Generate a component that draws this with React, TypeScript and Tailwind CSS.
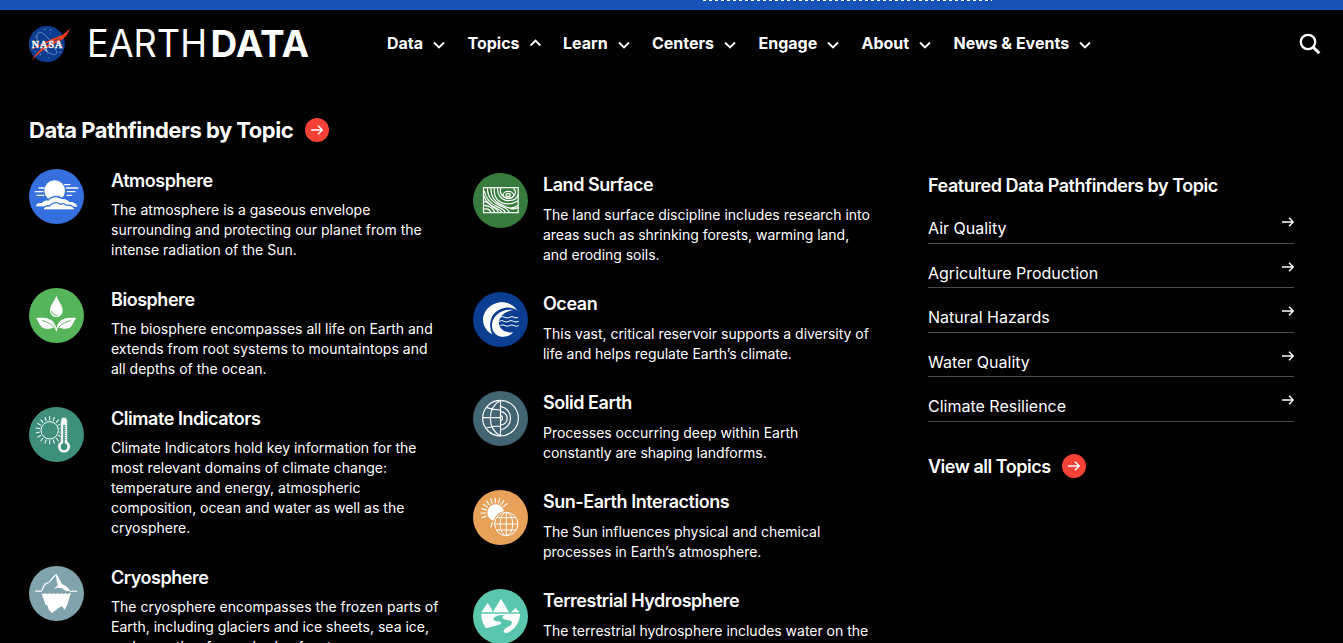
import type { ReactNode } from "react";

type Topic = { title: string; lines: string[]; icon: ReactNode };

const Atmosphere = () => (
  <svg viewBox="27 177 165 165" className="size-[55px] shrink-0">
    <circle cx="109.500" cy="259.500" r="82.500" fill="#3570de" />
    <g stroke="#fff" strokeWidth="4" strokeLinecap="round">
      <path d="M57 234h15M46 245h23M51 256h20M134 224h16M139 234h34M142 245h23M141 256h14" />
    </g>
    <circle cx="104" cy="242" r="31" fill="#fff" />
    <path d="M48 289c0-8 8-13 17-10 5-8 13-11 21-8 7-12 27-15 40-5 10-2 19 2 23 8 12-1 23 6 23 16z" fill="#fff" stroke="#3570de" strokeWidth="5" />
    <path d="M48 289c0-7 8-12 17-9 5-7 13-10 20-7 8-11 27-14 39-5 10-1 19 2 24 9 12-1 23 5 24 13z" fill="#fff" />
    <path d="M70 297c2-8 10-11 18-9 7-11 24-13 33-5 8-4 14-1 18 3 12-2 22 3 24 11z" fill="#fff" stroke="#3570de" strokeWidth="4" />
    <path d="M72 296h90" stroke="#fff" strokeWidth="4" />
  </svg>
);

const Biosphere = () => (
  <svg viewBox="27 24 165 165" className="size-[55px] shrink-0">
    <circle cx="109.500" cy="106.500" r="82.500" fill="#56b45a" />
    <path d="M109 47c5 16 19 28 19 45a19 19 0 0 1-38 0c0-17 14-29 19-45z" fill="#fff" />
    <path d="M95 94c2 8 8 12 16 12" fill="none" stroke="#56b45a" strokeWidth="3" strokeLinecap="round" />
    <path d="M48 114c24-3 48 0 56 18l5 12 5-12c8-18 32-21 55-18-9 9-10 27-24 31-13 4-23-2-29-2-4 3-5 8-7 13-2-5-3-10-7-13-7 1-16 6-30 2-14-5-15-22-24-31z" fill="#fff" />
    <path d="M68 122c14 4 27 10 37 24M150 122c-14 4-27 10-37 24" fill="none" stroke="#56b45a" strokeWidth="3" strokeLinecap="round" />
  </svg>
);

const rayAngles = Array.from({ length: 18 }, (_, i) => i * 20);

const Climate = () => (
  <svg viewBox="27 381 165 165" className="size-[55px] shrink-0">
    <circle cx="109.500" cy="463.500" r="82.500" fill="#3e907c" />
    <circle cx="89" cy="451" r="26" fill="none" stroke="#fff" strokeWidth="3" />
    {rayAngles.map((a) => (
      <path key={a} d="M89 420v-10" stroke="#fff" strokeWidth="3" strokeLinecap="round" transform={`rotate(${a} 89 451)`} />
    ))}
    <path d="M122 422a10 10 0 0 1 20 0v62a19 19 0 1 1-20 0z" fill="#fff" stroke="#3e907c" strokeWidth="2" />
    <path d="M132 434v58" stroke="#3e907c" strokeWidth="5" />
    <path d="M137 436v46" stroke="#3e907c" strokeWidth="3" strokeDasharray="2 4" />
    <circle cx="132" cy="500" r="10" fill="#3e907c" />
  </svg>
);

const Cryosphere = () => (
  <svg viewBox="27 33 165 165" className="size-[55px] shrink-0">
    <circle cx="109.500" cy="115.500" r="82.500" fill="#80a3ad" />
    <path d="M47 109c7-5 10 3 16 0 7-5 5-14 13-22 7-3 12-4 17-12l12-14 4-2 7 13 9 17c8 3 12 6 18 11 6 8 6 12 12 9l6-1 9 1" fill="none" stroke="#fff" strokeWidth="3.500" strokeLinecap="round" strokeLinejoin="round" />
    <path d="M108 60l8 12 9 18c7 2 15 6 21 12 4 6-2 7-7 7l-13-9-15-2-10 4 13-12-4-12z" fill="#fff" />
    <path d="M64 114q6 6 12 0 6 6 12 0 6 6 12 0 6 6 12 0 6 6 12 0 6 6 12 0 6 6 13 0h4c-4 14-7 18-10 32l-9 18-9-11c-5 5-11 5-14 10l-15 11-9-9-6-16-4 2z" fill="#fff" />
  </svg>
);

const LandSurface = () => (
  <svg viewBox="24 24 165 165" className="size-[55px] shrink-0">
    <circle cx="106.500" cy="106.500" r="82.500" fill="#377c3d" />
    <rect x="55.500" y="68" width="104" height="75" fill="none" stroke="#fff" strokeWidth="3.500" />
    <g fill="none" stroke="#fff" strokeWidth="3.600">
      <rect x="123" y="86" width="13" height="8" rx="4" />
      <ellipse cx="130" cy="90" rx="16" ry="11" />
      <path d="M98 69c-2 17 9 38 32 38 17 0 27-8 29-18M108 69c-5 10 0 29 22 30 15 0 25-12 20-23l-5-7" />
      <path d="M88 69c-3 31 15 44 34 47 15 3 24-1 37-8M78 69c-1 42 30 49 46 57 11 5 21 5 35-5M67 69c1 32 19 44 38 53 13 6 24 9 29 21M58 78c5 26 20 39 39 47 12 5 20 9 25 18M57 94c7 18 20 28 34 34 9 4 16 7 20 15M57 109c9 0 19 13 31 20 8 4 11 8 13 14M57 121c15 1 28 9 33 22M57 132c10-2 18 2 21 11M135 130c9 3 17 1 24-2" />
    </g>
  </svg>
);

const Ocean = () => (
  <svg viewBox="24 381 165 165" className="size-[55px] shrink-0">
    <circle cx="106.500" cy="463.500" r="82.500" fill="#0b3d91" />
    <path d="M157 437c-14-23-44-32-70-20-28 13-40 43-29 66 5 11 12 19 24 25-17-35 0-76 40-80 14-1 25 2 35 9z" fill="#fff" />
    <path d="M146 435c-37-6-67 19-65 49 1 18 14 33 34 31 11-1 23-4 29-13-25 2-41-9-42-27-1-19 15-36 44-40z" fill="#fff" />
    <path d="M106 457q8-5 14 0 7 4 14 0 7-5 13 0 6 3 12 0M102 469q8-5 15 0 7 4 14 0 7-5 14 0 8 4 16 0M106 482q8-5 14 0 7 4 14 0 7-5 13 0 7 4 14 0" fill="none" stroke="#fff" strokeWidth="3" />
  </svg>
);

const SolidEarth = () => (
  <svg viewBox="24 18 165 165" className="size-[55px] shrink-0">
    <circle cx="106.500" cy="100.500" r="82.500" fill="#436472" />
    <g fill="none" stroke="#fff" strokeWidth="3.500">
      <circle cx="106.500" cy="99.500" r="53.500" />
      <path d="M106.500 46v107M53 98h53M65 68q20 7 41 7M64 129q20-6 42-6M106 46c-40 24-40 83 0 107" />
      <path d="M106.500 64a36 36 0 0 1 0 71M106.500 80a20 20 0 0 1 0 40M106.500 91a9 9 0 0 1 0 17" />
    </g>
  </svg>
);

const sunRays = [-110, -92, -74, -56, -38, -20, -2, 16, 34, 52];

const SunEarth = () => (
  <svg viewBox="24 315 165 165" className="size-[55px] shrink-0">
    <circle cx="106.500" cy="397.500" r="82.500" fill="#e7a158" />
    <circle cx="92" cy="383" r="25" fill="#fff" />
    {sunRays.map((a) => (
      <path key={a} d="M92 353v-14" stroke="#fff" strokeWidth="3.500" strokeLinecap="round" transform={`rotate(${a} 92 383)`} />
    ))}
    <path d="M82 413l-4 13" stroke="#fff" strokeWidth="3.500" strokeLinecap="round" />
    <circle cx="124" cy="417" r="39" fill="#e7a158" />
    <g fill="none" stroke="#fff" strokeWidth="3">
      <circle cx="124" cy="417" r="35" />
      <ellipse cx="124" cy="417" rx="19" ry="35" />
      <path d="M124 382v70M89 417h70M95 398h58M95 435h58" />
    </g>
  </svg>
);

const Hydrosphere = () => (
  <svg viewBox="24 27 165 165" className="size-[55px] shrink-0">
    <circle cx="106.500" cy="109.500" r="82.500" fill="#5bc6ae" />
    <path d="M49 97l19-28 12 18 2 10zM83 97l25-41 24 41zM138 97l14-13 11 13z" fill="#fff" />
    <path d="M48 101h117c0 22-13 45-34 56-7 4-14 2-15-4 0-7 16-12 22-19 7-9-2-13-15-15-11-1-14-6-6-14-17-1-35 6-31 14 4 7 23 3 23 10 0 6-25 9-45 16-9-10-14-24-16-44z" fill="#fff" />
  </svg>
);

const leftTopics: Topic[] = [
  { title: "Atmosphere", icon: <Atmosphere />, lines: ["The atmosphere is a gaseous envelope", "surrounding and protecting our planet from the", "intense radiation of the Sun."] },
  { title: "Biosphere", icon: <Biosphere />, lines: ["The biosphere encompasses all life on Earth and", "extends from root systems to mountaintops and", "all depths of the ocean."] },
  { title: "Climate Indicators", icon: <Climate />, lines: ["Climate Indicators hold key information for the", "most relevant domains of climate change:", "temperature and energy, atmospheric", "composition, ocean and water as well as the", "cryosphere."] },
  { title: "Cryosphere", icon: <Cryosphere />, lines: ["The cryosphere encompasses the frozen parts of", "Earth, including glaciers and ice sheets, sea ice,", "and any other frozen body of water."] },
];

const rightTopics: Topic[] = [
  { title: "Land Surface", icon: <LandSurface />, lines: ["The land surface discipline includes research into", "areas such as shrinking forests, warming land,", "and eroding soils."] },
  { title: "Ocean", icon: <Ocean />, lines: ["This vast, critical reservoir supports a diversity of", "life and helps regulate Earth’s climate."] },
  { title: "Solid Earth", icon: <SolidEarth />, lines: ["Processes occurring deep within Earth", "constantly are shaping landforms."] },
  { title: "Sun-Earth Interactions", icon: <SunEarth />, lines: ["The Sun influences physical and chemical", "processes in Earth’s atmosphere."] },
  { title: "Terrestrial Hydrosphere", icon: <Hydrosphere />, lines: ["The terrestrial hydrosphere includes water on the"] },
];

const navItems = [
  { label: "Data", width: "w-[80.5px]" },
  { label: "Topics", width: "w-[95.5px]", open: true },
  { label: "Learn", width: "w-[89px]" },
  { label: "Centers", width: "w-[106.5px]" },
  { label: "Engage", width: "w-[103px]" },
  { label: "About", width: "w-[92px]" },
  { label: "News & Events", width: "w-[150px]" },
];

const featured = ["Air Quality", "Agriculture Production", "Natural Hazards", "Water Quality", "Climate Resilience"];

function Chevron({ open }: { open?: boolean }) {
  return (
    <svg viewBox="0 0 12 8" className={open ? "mb-[1px] h-2 w-3" : "mt-[3px] h-2 w-3"} fill="none" stroke="#fff" strokeWidth="1.8">
      <path d={open ? "M.6 6.500 5.500 1.500l4.900 5" : "M1 1.500l5 5 5-5"} />
    </svg>
  );
}

function Arrow() {
  return (
    <svg viewBox="0 0 12 10" className="h-[10px] w-3 shrink-0" fill="none" stroke="#fff" strokeWidth="1.5">
      <path d="M0 5h11.300M7 .7 11.300 5 7 9.300" />
    </svg>
  );
}

function ArrowBadge() {
  return (
    <span className="mb-px flex size-6 items-center justify-center rounded-full bg-[#f64137]">
      <Arrow />
    </span>
  );
}

function NasaLogo() {
  return (
    <svg viewBox="78 75 135 114" className="h-[38px] w-[45px]">
      <circle cx="140.500" cy="132" r="54" fill="#0b3d91" />
      <g fill="#dfe8f8">
        <circle cx="135" cy="88" r="1.500" /><circle cx="152" cy="89" r="1.500" /><circle cx="151" cy="101" r="1.200" />
        <circle cx="108" cy="111" r="1.500" /><circle cx="180" cy="157" r="1.500" /><circle cx="121" cy="163" r="1.500" />
        <circle cx="145" cy="174" r="1.200" /><circle cx="106" cy="154" r="1.200" />
      </g>
      <path d="M112 119c-3-18 3-29 17-19 17 12 30 34 40 53 3 9-3 13-11 10-13-4-23-11-31-21" fill="none" stroke="#b9c9e8" strokeWidth="1.500" />
      <path d="M80 149c28-5 49-21 71-30 24-9 43-13 59-35-8 29-29 40-54 51-25 11-44 27-61 47 14-24 29-39 52-50 14-6 26-11 36-18-14 7-27 9-43 16-22 9-37 18-60 19z" fill="#fc3d21" />
      <text x="95" y="143" textLength="92" lengthAdjust="spacing" fill="#fff" fontFamily="Liberation Serif, serif" fontWeight="700" fontSize="30" stroke="#fff" strokeWidth="1">NASA</text>
      <path d="M132 145l9 10-2-8" fill="none" stroke="#fff" strokeWidth="2" />
    </svg>
  );
}

function Wordmark() {
  return (
    <svg viewBox="0 0 224 50" className="h-[50px] w-[224px]" fill="#fff" fontFamily="Inter, sans-serif" fontSize="37.500">
      <text x="-1" y="38" fontWeight="430" textLength="120" lengthAdjust="spacingAndGlyphs">EARTH</text>
      <text x="122.500" y="38" fontWeight="700" textLength="98.500" lengthAdjust="spacingAndGlyphs">DATA</text>
    </svg>
  );
}

function TopicList({ topics, listClass, itemClass, bodyClass }: { topics: Topic[]; listClass: string; itemClass: string; bodyClass: string }) {
  return (
    <ul className={`flex flex-col ${listClass}`}>
      {topics.map((t) => (
        <li key={t.title} className={`flex ${itemClass}`}>
          {t.icon}
          <div className="whitespace-nowrap">
            <h3 className="h-6 text-[18px] leading-6 font-semibold tracking-[-0.46px]">{t.title}</h3>
            <p className={`text-[14px] leading-5 ${bodyClass}`}>
              {t.lines.map((l) => (
                <span key={l} className="block">{l}</span>
              ))}
            </p>
          </div>
        </li>
      ))}
    </ul>
  );
}

export default function App() {
  return (
    <div className="flex h-[643px] w-[1343px] flex-col overflow-hidden bg-black font-['Inter',sans-serif] text-white">
      <div className="h-[10px] shrink-0 bg-[#1752b6] pl-[703px]">
        <div className="h-px w-[289px] bg-[repeating-linear-gradient(90deg,#fff_0_3px,transparent_3px_6px)]" />
      </div>
      <header className="flex h-[68px] shrink-0 items-center pl-[26px]">
        <NasaLogo />
        <div className="ml-[17px] w-[299px]">
          <Wordmark />
        </div>
        <nav className="flex grow pb-[2px]">
          {navItems.map((n) => (
            <a key={n.label} className={`flex shrink-0 items-center gap-[10px] text-[16px] leading-6 font-bold whitespace-nowrap ${n.width}`}>
              {n.label}
              <Chevron open={n.open} />
            </a>
          ))}
        </nav>
        <svg viewBox="0 0 22 22" className="mr-[22px] mb-px size-[22px]" fill="none" stroke="#fff" strokeWidth="2.300">
          <circle cx="9" cy="9" r="7.200" />
          <path d="M14 14l6.300 6.300" strokeWidth="3" />
        </svg>
      </header>
      <main className="flex min-h-0 grow flex-col pl-[29px]">
        <h2 className="mt-[36px] flex h-8 shrink-0 items-center gap-3 text-[22px] font-bold tracking-[-0.5px] whitespace-nowrap">
          Data Pathfinders by Topic
          <ArrowBadge />
        </h2>
        <div className="mt-[23px] flex min-h-0">
          <section className="w-[444px] shrink-0">
            <TopicList topics={leftTopics} listClass="gap-7" itemClass="gap-[27px]" bodyClass="pt-[7px] tracking-[0.008px]" />
          </section>
          <section className="w-[455px] shrink-0 pt-1">
            <TopicList topics={rightTopics} listClass="gap-[27px]" itemClass="gap-[15px]" bodyClass="pt-2 tracking-[-0.02px]" />
          </section>
          <aside className="w-[366px] shrink-0 pt-[5px]">
            <h3 className="text-[18px] leading-6 font-semibold tracking-[-0.47px] whitespace-nowrap">Featured Data Pathfinders by Topic</h3>
            <ul className="pt-[1px]">
              {featured.map((f) => (
                <li key={f} className="flex h-[44.600px] items-end justify-between border-b border-[#4b4b4b] pb-[2.500px] text-[16px] leading-6">
                  <span>{f}</span>
                  <span className="flex h-[35px] items-center pb-[1px]"><Arrow /></span>
                </li>
              ))}
            </ul>
            <a className="mt-[33px] flex h-6 items-center gap-[11px] text-[18px] font-semibold tracking-[-0.48px]">
              View all Topics
              <ArrowBadge />
            </a>
          </aside>
        </div>
      </main>
    </div>
  );
}
